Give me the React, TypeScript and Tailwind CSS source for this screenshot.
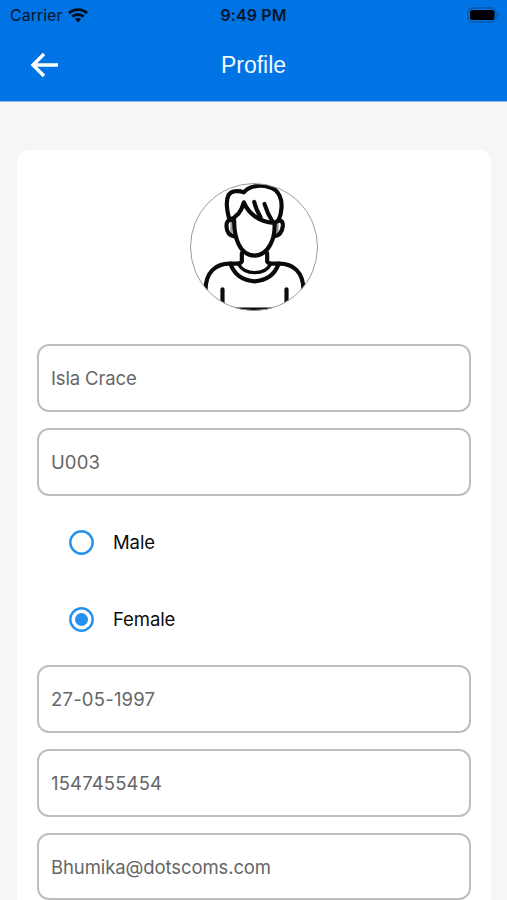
import { useState } from 'react';

type FieldProps = {
	name: string;
	value: string;
	className: string;
	onChange: (e: React.ChangeEvent<HTMLInputElement>) => void;
};

const StatusBar = () => {
	return (
		<div className="grid h-[30px] grid-cols-3 items-center pl-[10px] pr-[10px] text-[#04152c]">
			<div className="flex items-center gap-[6px]">
				<span className="text-[16px] leading-none">Carrier</span>
				<svg width="20" height="15" viewBox="0 0 20 15" fill="none" stroke="#020d1c" strokeWidth="2.9">
					<path d="M1 5.1C6 .4 14 .4 19 5.1" />
					<path d="M4.3 8.7C7.6 5.8 12.4 5.8 15.7 8.7" />
					<path d="M7 11.3C8.7 9.7 11.3 9.7 13 11.3L10 14.4Z" fill="#020d1c" stroke="none" />
				</svg>
			</div>
			<span className="text-center text-[16px] font-semibold leading-none tracking-[0.1px]">
				9:49 PM
			</span>
			<svg className="-mr-[3px] justify-self-end" width="33" height="16" viewBox="0 0 33 16">
				<rect x="1" y="1" width="28" height="14" rx="4.5" fill="none" stroke="#0558b0" strokeWidth="1.4" />
				<rect x="3" y="3" width="24.5" height="10" rx="2.5" fill="#000" />
				<path d="M30.5 5.5C32.6 6.3 32.6 9.7 30.5 10.5Z" fill="#0558b0" />
			</svg>
		</div>
	);
};

const Avatar = () => {
	return (
		<div className="mx-auto h-32 w-32">
			<svg width="128" height="128" viewBox="28.5 37 384 384" fill="none">
				<defs>
					<clipPath id="avatar">
						<circle cx="220.5" cy="229" r="191" />
					</clipPath>
				</defs>
				<g
					clipPath="url(#avatar)"
					stroke="#0a0a0a"
					strokeWidth="12.5"
					strokeLinecap="round"
					strokeLinejoin="round"
				>
					{/* hair */}
					<path d="M147 147C139 119 136 89 144 73C152 61 172 58 190 65C205 45 240 41 267 50C297 58 305 88 303 112C302 128 299 139 294 149" />
					<path d="M147 147C170 140 184 119 190 95C203 126 236 157 284 157L294 149" />
					<path d="M221 94C225 109 232 126 240 139M252 100C257 116 266 137 276 153" />
					{/* ears */}
					<path d="M153 153V186M291 154V186" stroke="#999" strokeWidth="7" />
					<path d="M157 149C142 145 137 154 138 168C139 183 145 195 161 197" />
					<path d="M286 154C300 145 308 151 307 166C305 183 299 195 281 197" />
					{/* face */}
					<path d="M161 147C160 200 177 254 222 255C265 254 285 202 282 157" />
					{/* neck and collar */}
					<path d="M184 247V273C181 279 171 279 150 279M260 247V273C263 279 275 279 294 279" />
					<path d="M150 281C164 316 187 330 222 332C257 330 281 315 294 281" />
					<path d="M174 281C194 314 252 314 270 281" strokeWidth="10" />
					{/* shirt */}
					<path d="M150 279C109 278 73 301 75 365M294 279C335 278 371 301 369 365" />
					<path d="M126 356V410M318 356V410" />
					<path d="M150 417H294" />
				</g>
				<circle cx="220.5" cy="229" r="190.5" stroke="#9b9b9b" strokeWidth="3" />
			</svg>
		</div>
	);
};

const Field = ({ name, value, className, onChange }: FieldProps) => {
	return (
		<div className="flex h-[67.7px] shrink-0 items-center rounded-[12px] border-2 border-[#bfbfbf] pl-[12px]">
			<input
				type="text"
				name={name}
				value={value}
				onChange={onChange}
				className={`${className} h-10 w-[380px] bg-transparent text-[18.5px] text-[#666] outline-none`}
			/>
		</div>
	);
};

const Radio = ({ label, checked, onSelect }: { label: string; checked: boolean; onSelect: () => void }) => {
	return (
		<button
			type="button"
			onClick={onSelect}
			className="flex h-[77px] items-center gap-[19px] pl-[32px] text-left"
		>
			<svg width="25" height="25" viewBox="0 0 25 25" fill="none">
				<circle cx="12.5" cy="12.5" r="11.2" stroke="#2492ed" strokeWidth="2.4" />
				{checked ? <circle cx="12.5" cy="12.5" r="6.5" fill="#2492ed" /> : null}
			</svg>
			<span className="text-[18.5px] tracking-[-0.1px] text-[#0b0b0b]">{label}</span>
		</button>
	);
};

const App = () => {
	const [formData, setFormData] = useState({
		name: 'Isla Crace',
		code: 'U003',
		gender: 'Female',
		birthday: '27-05-1997',
		phone: '1547455454',
		email: 'Bhumika@dotscoms.com',
	});

	const { name, code, gender, birthday, phone, email } = formData;

	const handleInputChange = (e: React.ChangeEvent<HTMLInputElement>) => {
		const { name, value } = e.target;

		setFormData({
			...formData,
			[name]: value,
		});
	};

	return (
		<main className="flex h-screen flex-col overflow-hidden bg-[#f6f6f6] font-['Inter',sans-serif]">
			<header className="h-[102px] shrink-0 border-b border-[#86bdf2] bg-[#0074e4]">
				<StatusBar />
				<div className="grid h-[70px] grid-cols-3 items-center">
					<button type="button" aria-label="Back" className="pl-[30px]">
						<svg width="29" height="26" viewBox="0 0 29 26" fill="none" stroke="#fff" strokeWidth="3.4">
							<path d="M14 2L3 13L14 24M2.5 13H28" />
						</svg>
					</button>
					<h1 className="text-center font-['Liberation_Sans',sans-serif] text-[23px] text-[#f2f8ff]">
						Profile
					</h1>
				</div>
			</header>
			<section className="ml-[17px] mr-4 mt-[48px] flex flex-1 flex-col overflow-hidden rounded-t-[12px] bg-white px-5 pt-[32.5px]">
				<Avatar />
				<form className="mt-[33.9px] flex flex-col">
					<div className="flex flex-col gap-4">
						<Field name="name" value={name} className="tracking-[-0.15px]" onChange={handleInputChange} />
						<Field name="code" value={code} className="tracking-[0.1px]" onChange={handleInputChange} />
					</div>
					<div className="mt-[8.4px] mb-[7.2px] flex flex-col">
						<Radio
							label="Male"
							checked={gender === 'Male'}
							onSelect={() => setFormData({ ...formData, gender: 'Male' })}
						/>
						<Radio
							label="Female"
							checked={gender === 'Female'}
							onSelect={() => setFormData({ ...formData, gender: 'Female' })}
						/>
					</div>
					<div className="flex flex-col gap-4">
						<Field name="birthday" value={birthday} className="tracking-[0.2px]" onChange={handleInputChange} />
						<Field name="phone" value={phone} className="tracking-[0.15px]" onChange={handleInputChange} />
						<Field name="email" value={email} className="tracking-[-0.1px]" onChange={handleInputChange} />
					</div>
				</form>
			</section>
		</main>
	);
};

export default App;
